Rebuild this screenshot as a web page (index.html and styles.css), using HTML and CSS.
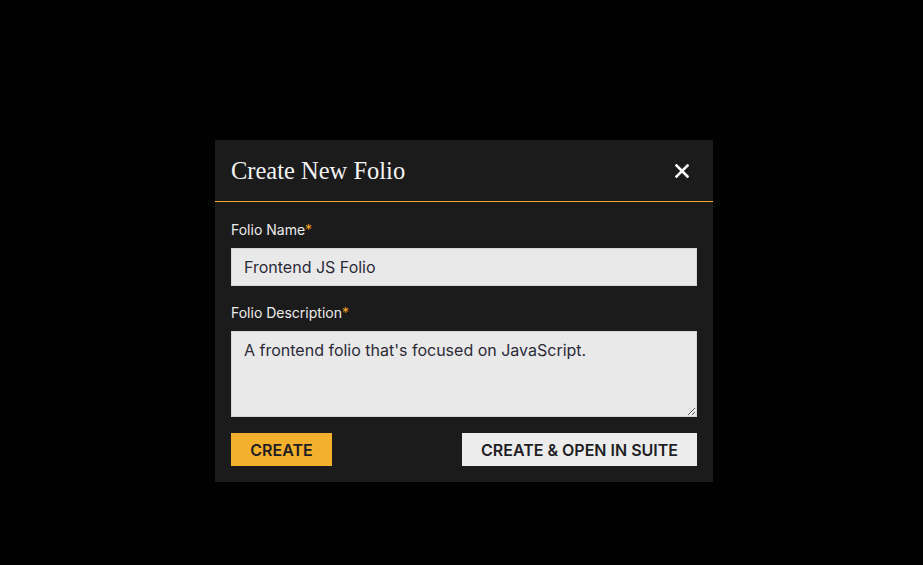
FILE: index.html
```html
<!DOCTYPE html>
<html lang="en">
<head>
<meta charset="utf-8">
<title>Create New Folio</title>
<link rel="stylesheet" href="styles.css">
</head>
<body>
<div class="overlay">
  <div class="modal">
    <div class="modal-header">
      <h2 class="modal-title">Create New Folio</h2>
      <button class="close-btn" aria-label="Close">
        <svg width="14" height="14" viewBox="0 0 14 14"><path d="M1.5 1.5 L12.5 12.5 M12.5 1.5 L1.5 12.5" stroke="#ffffff" stroke-width="2.6" stroke-linecap="square"/></svg>
      </button>
    </div>
    <div class="modal-body">
      <label class="field-label">Folio Name<span class="req">*</span></label>
      <input class="text-input" type="text" value="Frontend JS Folio">
      <label class="field-label">Folio Description<span class="req">*</span></label>
      <textarea class="text-area">A frontend folio that's focused on JavaScript.</textarea>
      <div class="actions">
        <button class="btn btn-primary">CREATE</button>
        <button class="btn btn-secondary">CREATE &amp; OPEN IN SUITE</button>
      </div>
    </div>
  </div>
</div>
</body>
</html>
```

FILE: styles.css
```css
html, body {
  margin: 0;
  padding: 0;
  background: #000000;
  width: 923px;
  height: 565px;
  overflow: hidden;
}
.overlay {
  display: flex;
  justify-content: center;
  padding-top: 140px;
  padding-left: 5px;
}
.modal {
  width: 498px;
  background: #1b1b1b;
  font-family: "Inter", "Liberation Sans", sans-serif;
}
.modal-header {
  height: 61px;
  border-bottom: 1px solid #f7a72a;
  display: flex;
  align-items: center;
  justify-content: space-between;
  padding: 0 16px;
}
.modal-title {
  margin: 0;
  font-family: "Liberation Serif", "DejaVu Serif", serif;
  font-weight: normal;
  font-size: 24.5px;
  color: #f4f4f4;
}
.close-btn {
  background: none;
  border: none;
  padding: 0;
  margin-right: 8px;
  width: 14px;
  height: 14px;
  display: flex;
  cursor: pointer;
}
.modal-body {
  padding: 17px 16px 16px 16px;
  display: flex;
  flex-direction: column;
}
.field-label {
  font-size: 14px;
  line-height: 21px;
  color: #ececec;
  font-weight: 400;
  margin-bottom: 8px;
}
.req {
  color: #f5a623;
}
.text-input, .text-area {
  box-sizing: border-box;
  width: 466px;
  background: #e9e9e9;
  border: 1px solid #d3d6dc;
  font-family: "Inter", "Liberation Sans", sans-serif;
  font-size: 16px;
  color: #2b2b38;
  margin: 0;
  outline: none;
}
.text-input {
  height: 38px;
  padding: 0 12px;
  margin-bottom: 16px;
}
.text-area {
  height: 86px;
  padding: 7px 12px;
  line-height: 22px;
  resize: vertical;
  margin-bottom: 16px;
}
.actions {
  display: flex;
  justify-content: space-between;
}
.btn {
  height: 33px;
  border: none;
  padding: 0;
  font-family: "Inter", "Liberation Sans", sans-serif;
  font-size: 16px;
  font-weight: 600;
  color: #1e1e24;
  cursor: pointer;
}
.btn-primary {
  background: #f3b02c;
  width: 101px;
}
.btn-secondary {
  background: #ececec;
  width: 235px;
}
```
